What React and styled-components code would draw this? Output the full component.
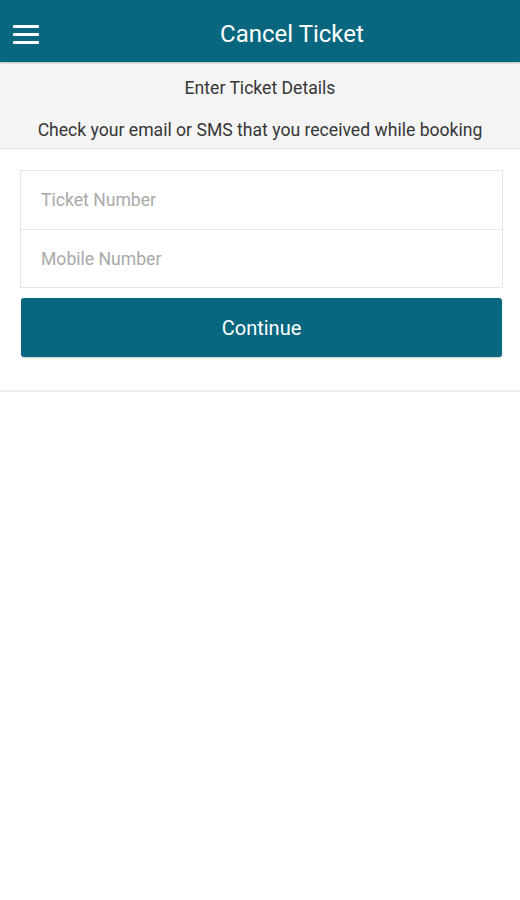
import React from 'react';
import styled, { createGlobalStyle } from 'styled-components';

const Global = createGlobalStyle`
  body {
    margin: 0;
    background: #ffffff;
    font-family: Roboto, "Liberation Sans", sans-serif;
  }
`;

const Page = styled.div`
  width: 520px;
  min-height: 900px;
  background: #fff;
`;

// barre du haut
const Header = styled.header`
  box-sizing: border-box;
  height: 62px;
  padding-top: 6px;
  background: #08677e;
  display: flex;
  align-items: center;
  box-shadow: 0 1px 2px rgba(0, 0, 0, 0.25);
  position: relative;
`;

const MenuButton = styled.button`
  width: 64px;
  height: 40px;
  border: 0;
  background: transparent;
  padding: 0 0 0 13px;
  display: flex;
  flex-direction: column;
  justify-content: center;
  gap: 5px;
  span {
    display: block;
    width: 26px;
    height: 3px;
    background: #fff;
    border-radius: 1px;
  }
`;

const Title = styled.h1`
  flex: 1;
  margin: 0;
  text-align: center;
  color: #fff;
  font-size: 24px;
  font-weight: 400;
`;

const Intro = styled.section`
  background: #f4f4f4;
  border-bottom: 1px solid #e2e2e2;
  height: 86px;
  display: flex;
  flex-direction: column;
  align-items: center;
  color: #363636;
  font-size: 17.6px;
`;

const Line = styled.p`
  margin: 0;
  margin-top: ${p => p.top}px;
  line-height: 22px;
`;

const Form = styled.div`
  padding: 21px 17px 33px 20px;
  border-bottom: 2px solid #ededed;
`;

const Fields = styled.div`
  border: 1px solid #e6e6e6;
  background: #fff;
`;

const Field = styled.input`
  display: block;
  width: 100%;
  box-sizing: border-box;
  height: 58px;
  border: 0;
  border-top: ${p => (p.first ? '0' : '1px solid #e8e8e8')};
  padding: 0 20px;
  font-family: inherit;
  font-size: 17.6px;
  color: #333;
  outline: none;
  &::placeholder {
    color: #a9a9a9;
  }
`;

const Button = styled.button`
  display: block;
  width: calc(100% - 2px);
  margin: 10px 1px 0;
  height: 59px;
  border: 0;
  border-radius: 3px;
  background: #08677e;
  color: #fff;
  font-family: inherit;
  font-size: 20px;
  box-shadow: 0 1px 2px rgba(0, 0, 0, 0.2);
`;

function App() {
  return (
    <Page>
      <Global />
      <Header>
        <MenuButton aria-label="menu">
          <span />
          <span />
          <span />
        </MenuButton>
        <Title>Cancel Ticket</Title>
      </Header>
      <Intro>
        <Line top={15}>Enter Ticket Details</Line>
        <Line top={20}>Check your email or SMS that you received while booking</Line>
      </Intro>
      <Form>
        <Fields>
          <Field first placeholder="Ticket Number" />
          <Field placeholder="Mobile Number" />
        </Fields>
        <Button>Continue</Button>
      </Form>
    </Page>
  );
}

export default App;
